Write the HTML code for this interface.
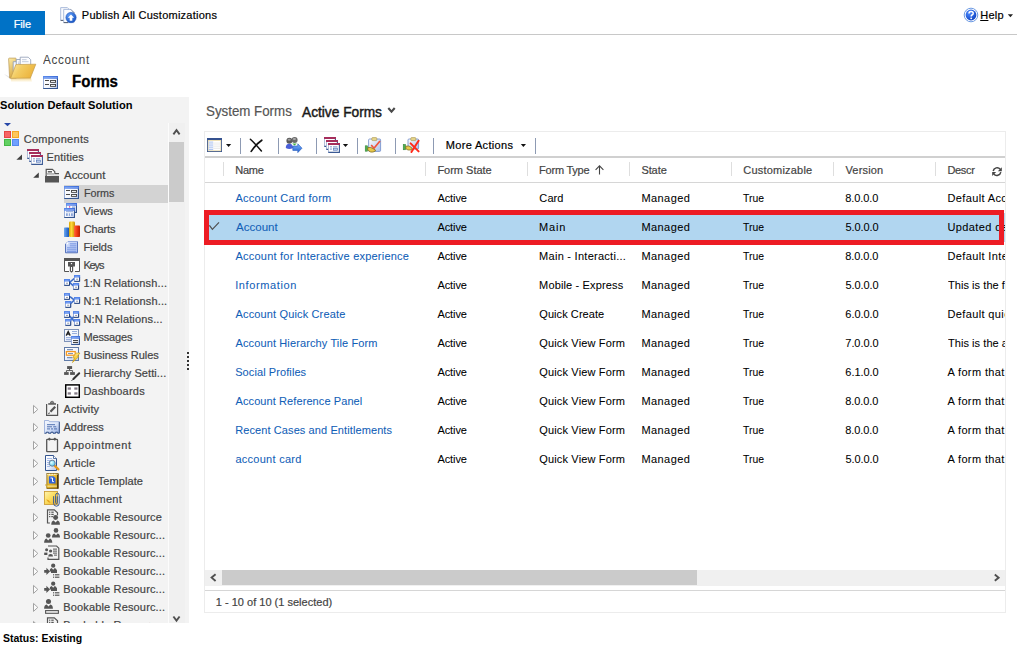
<!DOCTYPE html>
<html lang="en">
<head>
<meta charset="utf-8">
<title>Solution: Default Solution - Forms</title>
<style>
html,body{margin:0;padding:0;background:#fff;}
body{width:1017px;height:645px;position:relative;overflow:hidden;font-family:'Liberation Sans',sans-serif;}
.a{position:absolute;}
.t{position:absolute;white-space:pre;line-height:16px;height:16px;font-family:'Liberation Sans',sans-serif;}
svg{position:absolute;overflow:visible;}
</style>
</head>
<body>
<!-- top bar -->
<div class="a" style="left:0;top:34px;width:1017px;height:1px;background:#c8c8c8"></div>
<div class="a" style="left:0;top:11px;width:45px;height:24px;background:#0072c6"></div>

<!-- tree panel -->
<div class="a" style="left:0;top:97px;width:189px;height:526px;background:#f3f3f3"></div>
<div class="a" style="left:168px;top:123px;width:1px;height:500px;background:#fcfcfc"></div>
<div class="a" style="left:169px;top:123px;width:16px;height:500px;background:#f0f0f0"></div>
<div class="a" style="left:169px;top:142px;width:15px;height:60px;background:#cbcbcb"></div>
<div class="a" style="left:64px;top:185px;width:104px;height:18px;background:#d3d3d3"></div>

<!-- grid frame -->
<div class="a" style="left:204px;top:131px;width:802px;height:482px;border:1px solid #ececec;box-sizing:border-box"></div>
<div class="a" style="left:205px;top:156px;width:800px;height:2px;background:#d0d0d0"></div>
<div class="a" style="left:205px;top:182px;width:800px;height:1px;background:#d6d6d6"></div>
<!-- selected row -->
<div class="a" style="left:205px;top:213px;width:800px;height:29px;background:#b1d6f0"></div>
<div class="a" style="left:204px;top:210px;width:800px;height:35px;border:5px solid #ed1c24;box-sizing:border-box;z-index:5"></div>
<!-- h scrollbar -->
<div class="a" style="left:205px;top:570px;width:800px;height:16px;background:#f0f0f0"></div>
<div class="a" style="left:222px;top:570px;width:475px;height:15px;background:#cbcbcb"></div>
<div class="a" style="left:205px;top:590px;width:800px;height:1px;background:#d6d6d6"></div>

<svg class="ic" width="189" height="526" viewBox="0 97 189 526" style="left:0;top:97px;overflow:hidden"><defs>
<linearGradient id="gtitle" x1="0" y1="0" x2="1" y2="0"><stop offset="0" stop-color="#5d8cec"/><stop offset="1" stop-color="#3d6cd8"/></linearGradient>
<linearGradient id="gwin" x1="0" y1="0" x2="1" y2="1"><stop offset="0" stop-color="#ffffff"/><stop offset="0.6" stop-color="#f3f6fd"/><stop offset="1" stop-color="#b9c9ee"/></linearGradient>
<linearGradient id="gdoc" x1="0" y1="0" x2="0.6" y2="1"><stop offset="0" stop-color="#ffffff"/><stop offset="0.7" stop-color="#eef2fb"/><stop offset="1" stop-color="#c6d3f0"/></linearGradient>
<linearGradient id="gfld" x1="0" y1="0" x2="1" y2="1"><stop offset="0" stop-color="#d2defa"/><stop offset="1" stop-color="#b3c6f2"/></linearGradient>
<linearGradient id="gaddr" x1="0" y1="0" x2="0.8" y2="1"><stop offset="0" stop-color="#f4f7fe"/><stop offset="0.5" stop-color="#dfe8fa"/><stop offset="1" stop-color="#9ab2e4"/></linearGradient>
<linearGradient id="gblue" x1="0" y1="0" x2="1" y2="0"><stop offset="0" stop-color="#6fa8f0"/><stop offset="0.5" stop-color="#3f7fd8"/><stop offset="1" stop-color="#1f55b0"/></linearGradient>
<linearGradient id="gyel" x1="0" y1="0" x2="1" y2="0"><stop offset="0" stop-color="#d8a400"/><stop offset="0.4" stop-color="#ffd83a"/><stop offset="1" stop-color="#c89200"/></linearGradient>
<linearGradient id="gred" x1="0" y1="0" x2="1" y2="0"><stop offset="0" stop-color="#ff6a3a"/><stop offset="0.5" stop-color="#f23a12"/><stop offset="1" stop-color="#b81e00"/></linearGradient>
<linearGradient id="gbolt" x1="0" y1="0" x2="0" y2="1"><stop offset="0" stop-color="#ffe680"/><stop offset="1" stop-color="#f0b400"/></linearGradient>
<linearGradient id="ggold" x1="0" y1="0" x2="1" y2="1"><stop offset="0" stop-color="#ffe27a"/><stop offset="0.5" stop-color="#e8b62a"/><stop offset="1" stop-color="#8a6410"/></linearGradient>
<linearGradient id="gnote" x1="0" y1="0" x2="1" y2="1"><stop offset="0" stop-color="#fff5b0"/><stop offset="0.5" stop-color="#fbdc5e"/><stop offset="1" stop-color="#e8b030"/></linearGradient>
<radialGradient id="glens" cx="0.4" cy="0.4" r="0.7"><stop offset="0" stop-color="#e8ffff"/><stop offset="1" stop-color="#35c3ee"/></radialGradient>
<linearGradient id="gfold" x1="0" y1="0" x2="1" y2="0.4"><stop offset="0" stop-color="#fdeaa6"/><stop offset="0.45" stop-color="#f3cc62"/><stop offset="1" stop-color="#ecb43e"/></linearGradient>
<linearGradient id="grefl" x1="0" y1="0" x2="0" y2="1"><stop offset="0" stop-color="#f0c45a" stop-opacity="0.75"/><stop offset="1" stop-color="#f8e4a8" stop-opacity="0"/></linearGradient>
<linearGradient id="gfoldb" x1="0" y1="0" x2="0.3" y2="1"><stop offset="0" stop-color="#fdeca6"/><stop offset="1" stop-color="#d8aa48"/></linearGradient>
<radialGradient id="ghelp" cx="0.35" cy="0.3" r="0.8"><stop offset="0" stop-color="#4f8cff"/><stop offset="1" stop-color="#0a3fc0"/></radialGradient>
<radialGradient id="gpub" cx="0.35" cy="0.3" r="0.8"><stop offset="0" stop-color="#5f9cf5"/><stop offset="1" stop-color="#1450c0"/></radialGradient>
<linearGradient id="garrow" x1="0" y1="0" x2="0" y2="1"><stop offset="0" stop-color="#7fb6ff"/><stop offset="1" stop-color="#1f5fd0"/></linearGradient>
<linearGradient id="gclip" x1="0" y1="0" x2="1" y2="1"><stop offset="0" stop-color="#ffffff"/><stop offset="1" stop-color="#a9c0ea"/></linearGradient>
</defs><path d="M4,123 H11 L7.5,126.2 Z" fill="#2848a8"/>
<g transform="translate(4,131)"><rect x="0.5" y="0.5" width="6" height="6" fill="#f76464" stroke="#e64545"/><rect x="8.5" y="0.5" width="6" height="6" fill="#fdc65c" stroke="#f5a623"/><rect x="0.5" y="8.5" width="6" height="6" fill="#62d062" stroke="#45b845"/><rect x="8.5" y="8.5" width="6" height="6" fill="#6fa0ff" stroke="#5588ee"/></g>
<path d="M22.0,154.4 V159.8 H16.4 Z" fill="#404040"/>
<g transform="translate(27,149)"><rect x="0.5" y="0.5" width="11" height="9" fill="#fff" stroke="#a9b8d6" stroke-width="0.9"/><path d="M0.4,9.4 H11.4 V1.6" fill="none" stroke="#3b5a94" stroke-width="1.1"/><rect x="0" y="0" width="12" height="2" fill="#a62e5c"/><rect x="2.5" y="3.5" width="11" height="9" fill="#fff" stroke="#a9b8d6" stroke-width="0.9"/><path d="M2.4,12.4 H13.4 V4.6" fill="none" stroke="#3b5a94" stroke-width="1.1"/><rect x="2" y="3" width="12" height="2" fill="#a62e5c"/><rect x="4.5" y="6.5" width="11" height="9" fill="#fff" stroke="#a9b8d6" stroke-width="0.9"/><path d="M4.4,15.4 H15.4 V7.6" fill="none" stroke="#3b5a94" stroke-width="1.1"/><rect x="4" y="6" width="12" height="2" fill="#a62e5c"/><rect x="6" y="9.4" width="2" height="0.9" fill="#6f8cc8"/><rect x="6" y="11.6" width="2" height="0.9" fill="#6f8cc8"/><rect x="9" y="9.4" width="4.4" height="0.9" fill="#6f8cc8"/><rect x="9.4" y="11.2" width="4" height="2" fill="#c9d6f2" stroke="#5577b8" stroke-width="0.7"/></g>
<path d="M38.800000000000004,172.4 V177.8 H33.2 Z" fill="#404040"/>
<g transform="translate(45,168.5)"><rect x="0" y="7.4" width="14" height="6.6" fill="#555"/><path d="M1.2,7.4 V0.8 H7.4 L9.8,3.2 V5.2 H14" fill="#fff" stroke="#555" stroke-width="1.2"/><rect x="2.8" y="2.6" width="4.2" height="1.4" fill="#555"/><rect x="1.8" y="5.2" width="8" height="1" fill="#fff"/><rect x="1.8" y="5" width="7.6" height="0.9" fill="#555" opacity="0.85"/></g>
<g transform="translate(64,186)"><rect x="0.5" y="0.5" width="14" height="12" fill="url(#gwin)" stroke="#8fa6d6" stroke-width="0.9"/><path d="M0.3,12.45 H14.45 V2" fill="none" stroke="#34558f" stroke-width="1.1"/><rect x="0" y="0" width="15" height="2.7" fill="url(#gtitle)"/><rect x="0.8" y="1" width="13.4" height="0.8" fill="#8fb2f6" opacity="0.8"/><rect x="2" y="4" width="4" height="1" fill="#4a4a4a"/><rect x="2" y="8" width="4" height="1" fill="#4a4a4a"/><rect x="7.55" y="4.45" width="5" height="1.9" fill="#fff" stroke="#3c3c3c" stroke-width="0.9"/><rect x="7.55" y="8.45" width="5" height="1.9" fill="#fff" stroke="#3c3c3c" stroke-width="0.9"/></g>
<g transform="translate(64,203)"><rect x="2.5" y="0.5" width="10" height="9" fill="url(#gwin)" stroke="#8fa6d6" stroke-width="0.9"/><path d="M2.3,9.45 H12.45 V2" fill="none" stroke="#34558f" stroke-width="1.1"/><rect x="2" y="0" width="11" height="2.7" fill="url(#gtitle)"/><rect x="2.8" y="1" width="9.4" height="0.8" fill="#8fb2f6" opacity="0.8"/><rect x="5" y="3.3" width="1.2" height="1.2" fill="#e0208a"/><rect x="8" y="3.6" width="3" height="1" fill="#6a8fd0"/><rect x="0.5" y="5.5" width="10" height="9" fill="url(#gwin)" stroke="#8fa6d6" stroke-width="0.9"/><path d="M0.3,14.45 H10.45 V7" fill="none" stroke="#34558f" stroke-width="1.1"/><rect x="0" y="5" width="11" height="2.7" fill="url(#gtitle)"/><rect x="0.8" y="6" width="9.4" height="0.8" fill="#8fb2f6" opacity="0.8"/><rect x="2" y="8.2" width="7" height="1" fill="#8aa4d6"/><rect x="2" y="10.3" width="1.8" height="2.6" fill="#8aa4d6"/><rect x="4.8" y="10.3" width="1.2" height="2.6" fill="#8aa4d6"/><rect x="7" y="10.3" width="1.8" height="2.6" fill="#8aa4d6"/></g>
<g transform="translate(64,221)"><rect x="0" y="6.5" width="5" height="9.5" rx="0.6" fill="url(#gblue)"/><rect x="5" y="0.5" width="6" height="15.5" rx="1.2" fill="url(#gyel)"/><rect x="10" y="4.5" width="6" height="11.5" rx="0.8" fill="url(#gred)"/></g>
<g transform="translate(64.6,241)"><path d="M3.4,0.4 H13 V12 H0.8 V3 Z" fill="url(#gfld)"/><path d="M0.9,3 V11.8 H12.9 V0.5" fill="none" stroke="#4a68b4" stroke-width="0.9"/><path d="M0.9,3 L3.4,0.5 H12.9" fill="none" stroke="#7f98d8" stroke-width="0.8"/><path d="M1.2,3.2 H3.6 V0.8 Z" fill="#fff"/><g fill="#6f8fe0"><rect x="5.2" y="2.4" width="6.6" height="0.9"/><rect x="5.2" y="4.4" width="6.6" height="0.9"/><rect x="2.4" y="6.4" width="9.4" height="0.9"/><rect x="2.4" y="8.4" width="9.4" height="0.9"/><rect x="2.4" y="10.1" width="9.4" height="0.8"/></g></g>
<g transform="translate(64,258)"><rect x="0" y="0" width="16" height="3" fill="#555"/><path d="M0.5,2 V13.5 H5 M11,13.5 H15.5 V2" fill="#fff" stroke="#555" stroke-width="1"/><rect x="1" y="3" width="14" height="10" fill="#fff"/><path d="M4,4 H11 V8.5 H9.2 V13.2 L7.5,14.8 L5.8,13.2 V8.5 H4 Z" fill="#555"/><rect x="6.9" y="5" width="1.2" height="1.2" fill="#fff"/><rect x="7" y="9" width="1" height="4" fill="#fff"/></g>
<g transform="translate(64,274)"><path d="M5.5,8.4 L10.5,4.4 M5.5,8.4 L10,12.4" stroke="#3f6fc8" stroke-width="1.6" fill="none"/><rect x="0.4" y="5.4" width="5.2" height="6.0" fill="#fff" stroke="#7f9ad8" stroke-width="0.8"/><path d="M0.3,11.3 H5.5 V7" fill="none" stroke="#22407a" stroke-width="1"/><rect x="0" y="5" width="6" height="2.5" fill="#4f82ea"/><rect x="1" y="5.9" width="3.6" height="0.7" fill="#8fb0f4"/><rect x="2" y="8.7" width="2" height="1" fill="#8e94a8"/><rect x="10.5" y="1.4" width="5.2" height="6.0" fill="#fff" stroke="#7f9ad8" stroke-width="0.8"/><path d="M10.4,7.3 H15.600000000000001 V3" fill="none" stroke="#22407a" stroke-width="1"/><rect x="10.1" y="1" width="6" height="2.5" fill="#4f82ea"/><rect x="11.1" y="1.9" width="3.6" height="0.7" fill="#8fb0f4"/><rect x="12.1" y="4.7" width="2" height="1" fill="#8e94a8"/><rect x="9.5" y="9.4" width="5.2" height="6.0" fill="#fff" stroke="#7f9ad8" stroke-width="0.8"/><path d="M9.4,15.3 H14.6 V11" fill="none" stroke="#22407a" stroke-width="1"/><rect x="9.1" y="9" width="6" height="2.5" fill="#4f82ea"/><rect x="10.1" y="9.9" width="3.6" height="0.7" fill="#8fb0f4"/><rect x="11.1" y="12.7" width="2" height="1" fill="#8e94a8"/></g>
<g transform="translate(64,292)"><path d="M6,4.6 L10.4,8 L6.5,11.6" stroke="#3f6fc8" stroke-width="1.6" fill="none"/><rect x="0.4" y="1.6" width="5.2" height="5.8" fill="#fff" stroke="#7f9ad8" stroke-width="0.8"/><path d="M0.3,7.3 H5.5 V3.2" fill="none" stroke="#22407a" stroke-width="1"/><rect x="0" y="1.2" width="6" height="2.5" fill="#4f82ea"/><rect x="1" y="2.1" width="3.6" height="0.7" fill="#8fb0f4"/><rect x="2" y="4.9" width="2" height="1" fill="#8e94a8"/><rect x="1.6" y="9.4" width="5.2" height="6.0" fill="#fff" stroke="#7f9ad8" stroke-width="0.8"/><path d="M1.5,15.3 H6.7 V11" fill="none" stroke="#22407a" stroke-width="1"/><rect x="1.2" y="9" width="6" height="2.5" fill="#4f82ea"/><rect x="2.2" y="9.9" width="3.6" height="0.7" fill="#8fb0f4"/><rect x="3.2" y="12.7" width="2" height="1" fill="#8e94a8"/><rect x="10.5" y="5.4" width="5.2" height="6.0" fill="#fff" stroke="#7f9ad8" stroke-width="0.8"/><path d="M10.4,11.3 H15.600000000000001 V7" fill="none" stroke="#22407a" stroke-width="1"/><rect x="10.1" y="5" width="6" height="2.5" fill="#4f82ea"/><rect x="11.1" y="5.9" width="3.6" height="0.7" fill="#8fb0f4"/><rect x="12.1" y="8.7" width="2" height="1" fill="#8e94a8"/></g>
<g transform="translate(64,310)"><path d="M5,5.4 L11,12 M11,5.4 L5,12" stroke="#3f6fc8" stroke-width="1.8" fill="none"/><rect x="0.4" y="1.6" width="5.2" height="5.8" fill="#fff" stroke="#7f9ad8" stroke-width="0.8"/><path d="M0.3,7.3 H5.5 V3.2" fill="none" stroke="#22407a" stroke-width="1"/><rect x="0" y="1.2" width="6" height="2.5" fill="#4f82ea"/><rect x="1" y="2.1" width="3.6" height="0.7" fill="#8fb0f4"/><rect x="2" y="4.9" width="2" height="1" fill="#8e94a8"/><rect x="9.5" y="1.6" width="5.2" height="5.8" fill="#fff" stroke="#7f9ad8" stroke-width="0.8"/><path d="M9.4,7.3 H14.6 V3.2" fill="none" stroke="#22407a" stroke-width="1"/><rect x="9.1" y="1.2" width="6" height="2.5" fill="#4f82ea"/><rect x="10.1" y="2.1" width="3.6" height="0.7" fill="#8fb0f4"/><rect x="11.1" y="4.9" width="2" height="1" fill="#8e94a8"/><rect x="1.6" y="9.4" width="5.2" height="6.0" fill="#fff" stroke="#7f9ad8" stroke-width="0.8"/><path d="M1.5,15.3 H6.7 V11" fill="none" stroke="#22407a" stroke-width="1"/><rect x="1.2" y="9" width="6" height="2.5" fill="#4f82ea"/><rect x="2.2" y="9.9" width="3.6" height="0.7" fill="#8fb0f4"/><rect x="3.2" y="12.7" width="2" height="1" fill="#8e94a8"/><rect x="10.5" y="9.4" width="5.2" height="6.0" fill="#fff" stroke="#7f9ad8" stroke-width="0.8"/><path d="M10.4,15.3 H15.600000000000001 V11" fill="none" stroke="#22407a" stroke-width="1"/><rect x="10.1" y="9" width="6" height="2.5" fill="#4f82ea"/><rect x="11.1" y="9.9" width="3.6" height="0.7" fill="#8fb0f4"/><rect x="12.1" y="12.7" width="2" height="1" fill="#8e94a8"/></g>
<g transform="translate(64,329)"><rect x="0.5" y="0.5" width="14" height="12" fill="url(#gdoc)" stroke="#7f93b8"/><path d="M2.2,6.6 L4.2,2.4 L6.2,6.6 M3,5.2 H5.4" stroke="#222" stroke-width="1.3" fill="none"/><g fill="#8ea6da"><rect x="8" y="2" width="5" height="0.9"/><rect x="8" y="4" width="5" height="0.9"/><rect x="2" y="8.2" width="5" height="0.9"/><rect x="2" y="10.2" width="5" height="0.9"/></g><rect x="7.5" y="7.5" width="8" height="8" fill="url(#gwin)" stroke="#8fa6d6" stroke-width="0.9"/><path d="M7.3,15.45 H15.45 V9" fill="none" stroke="#34558f" stroke-width="1.1"/><rect x="7" y="7" width="9" height="2.7" fill="url(#gtitle)"/><rect x="7.8" y="8" width="7.4" height="0.8" fill="#8fb2f6" opacity="0.8"/><rect x="9" y="11" width="5" height="1.1" fill="#444"/><rect x="9" y="13" width="5" height="1.1" fill="#444"/></g>
<g transform="translate(64,347)"><rect x="0.5" y="0.5" width="14" height="13" fill="url(#gdoc)" stroke="#5f7aa8"/><rect x="3" y="2.2" width="6" height="1" fill="#5f7aa8"/><rect x="3" y="10.2" width="5" height="1" fill="#5f7aa8"/><rect x="2.4" y="4.6" width="8.8" height="3.6" fill="#fff" stroke="#f59a23" stroke-width="1.3"/><rect x="4" y="6" width="5" height="1" fill="#7f93b8"/><path d="M12,6 L16,6 L13.2,9.4 L15,9.4 L8.4,15.6 L10.6,10.8 L8.6,10.8 Z" fill="url(#gbolt)" stroke="#c89a10" stroke-width="0.6"/></g>
<g transform="translate(64,365)"><rect x="3.1" y="1.1" width="5" height="2.9" fill="#555"/><rect x="0.1" y="7.1" width="4.6" height="2.8" fill="#555"/><rect x="6.1" y="7.1" width="4.8" height="2.8" fill="#555"/><path d="M5.6,4 V5.6 M2.4,7.1 V5.6 H8.6 V7.1" stroke="#555" stroke-width="1" fill="none"/><path d="M15.2,8.2 L9.4,14" stroke="#333" stroke-width="2" stroke-linecap="round"/><path d="M8.9,14.4 L7.6,15.8" stroke="#333" stroke-width="1"/></g>
<g transform="translate(64,384)"><rect x="0.2" y="-0.6" width="16.6" height="15.4" rx="1" fill="#fff"/><rect x="1.7" y="0.9" width="13.6" height="12.4" fill="#fff" stroke="#000" stroke-width="1.5"/><g fill="#857c88"><rect x="3.7" y="3.4" width="3.2" height="2.3"/><rect x="10.3" y="3.4" width="3.2" height="2.3"/><rect x="3.7" y="8.3" width="3.2" height="2.3"/><rect x="10.3" y="8.3" width="3.2" height="2.3"/></g></g>
<path d="M33.5,405.4 L37.8,409.4 L33.5,413.4 Z" fill="#fbfbfb" stroke="#a3a3a3" stroke-width="1"/>
<g transform="translate(46,401)"><path d="M0.6,3 V14.4 H11.6 V3" fill="none" stroke="#555" stroke-width="1.2"/><rect x="2.2" y="2.2" width="7.8" height="1.5" fill="#555"/><path d="M4.2,2.4 Q4.4,0.2 6.1,0.2 Q7.8,0.2 8,2.4 Z" fill="#8a8a8a" stroke="#555" stroke-width="0.7"/><path d="M9.2,5.8 L4.4,10.8" stroke="#555" stroke-width="2.2"/><path d="M3.6,11.6 L2.4,13" stroke="#555" stroke-width="1.1"/></g>
<path d="M33.5,423.4 L37.8,427.4 L33.5,431.4 Z" fill="#fbfbfb" stroke="#a3a3a3" stroke-width="1"/>
<g transform="translate(44,420)"><path d="M0.4,0.4 H4.8 L5.4,1.6 H15.6 V13.6 H13.6 V12.6 H11.6 V13.6 H9 V12.6 H7 V13.6 H4.4 V12.6 H2.4 V13.6 H0.4 Z" fill="url(#gaddr)"/><path d="M0.4,13.2 H2.4 V12.2 H4.4 V13.2 H7 V12.2 H9 V13.2 H11.6 V12.2 H13.6 V13.2 H15.3 V1.8" fill="none" stroke="#2f4d85" stroke-width="1"/><path d="M0.5,12.8 V0.5 H4.8 L5.4,1.7 H15.4" fill="none" stroke="#8fa6d6" stroke-width="0.8"/><g fill="#4f70b0"><rect x="3" y="4.2" width="8" height="1"/><rect x="3" y="6.3" width="5" height="1"/><rect x="9.2" y="6.3" width="3" height="1"/><rect x="3" y="8.4" width="3" height="1"/><rect x="7" y="8.4" width="2" height="1"/><rect x="10" y="8.4" width="3" height="1"/></g></g>
<path d="M33.5,441.4 L37.8,445.4 L33.5,449.4 Z" fill="#fbfbfb" stroke="#a3a3a3" stroke-width="1"/>
<g transform="translate(46,437.5)"><rect x="0.7" y="1.8" width="10.8" height="12.4" rx="0.8" fill="none" stroke="#555" stroke-width="1.3"/><rect x="2.4" y="0.2" width="2" height="2.8" rx="0.8" fill="#555"/><rect x="7.8" y="0.2" width="2" height="2.8" rx="0.8" fill="#555"/></g>
<path d="M33.5,459.4 L37.8,463.4 L33.5,467.4 Z" fill="#fbfbfb" stroke="#a3a3a3" stroke-width="1"/>
<g transform="translate(45,455)"><path d="M0.5,0.5 H8.5 L11.5,3.5 V15.5 H0.5 Z" fill="url(#gdoc)" stroke="#34558f"/><path d="M8.5,0.5 V3.5 H11.5" fill="#fff" stroke="#34558f" stroke-width="0.8"/><g fill="#9db4e6"><rect x="2" y="3" width="5" height="0.9"/><rect x="2" y="5" width="3" height="0.9"/><rect x="2" y="7" width="2" height="0.9"/><rect x="2" y="9" width="2" height="0.9"/><rect x="2" y="11" width="3" height="0.9"/></g><path d="M9.6,10.6 L13.4,14.4" stroke="#e89a1c" stroke-width="2.2" stroke-linecap="round"/><circle cx="7.2" cy="8.2" r="3" fill="url(#glens)" stroke="#6b7d99" stroke-width="1"/></g>
<path d="M33.5,477.4 L37.8,481.4 L33.5,485.4 Z" fill="#fbfbfb" stroke="#a3a3a3" stroke-width="1"/>
<g transform="translate(44.5,473)"><rect x="2.4" y="0.4" width="11.2" height="15" fill="url(#ggold)" stroke="#7a5a10" stroke-width="0.8"/><rect x="12.6" y="1" width="1.4" height="14.6" fill="#4a3408"/><path d="M3,1.4 H13" stroke="#fff" stroke-width="1.4" stroke-dasharray="0.8 0.8"/><path d="M4.4,3.2 H9 L11,5 V10.4 H4.4 Z" fill="#2f62d8"/><path d="M6,5 H8 V8.6 H9.4" stroke="#fff" stroke-width="1" fill="none"/><path d="M0.6,12 H12.4 M1.6,14 H12.4" stroke="#d8a818" stroke-width="1.2"/><rect x="2.8" y="12.6" width="9.6" height="1" fill="#fff3b0"/></g>
<path d="M33.5,495.4 L37.8,499.4 L33.5,503.4 Z" fill="#fbfbfb" stroke="#a3a3a3" stroke-width="1"/>
<g transform="translate(44,491)"><rect x="0.4" y="0.4" width="13" height="13" fill="url(#gnote)" stroke="#c9962a" stroke-width="0.8"/><path d="M2.2,8.6 Q4.4,8 6.6,11.6 Q4.2,12.2 2.2,8.6 Z" fill="#e6a21e"/><path d="M9.6,5.2 V12.2 Q9.6,15.2 12.4,15.2 Q15.2,15.2 15.2,12.2 V4.4 Q15.2,2.2 13.4,2.2 Q11.6,2.2 11.6,4.4 V11.6 Q11.6,12.6 12.5,12.6 Q13.3,12.6 13.3,11.6 V5.4" fill="none" stroke="#3a5a90" stroke-width="1"/></g>
<path d="M33.5,513.4 L37.8,517.4 L33.5,521.4 Z" fill="#fbfbfb" stroke="#a3a3a3" stroke-width="1"/>
<g transform="translate(46.5,509)"><path d="M3.4,14 H1 V0.8 H7.8 L11,3.8 V6.2" fill="none" stroke="#555" stroke-width="1.2"/><g fill="#555"><rect x="2.6" y="2.6" width="1.2" height="1.2"/><rect x="4.8" y="2.6" width="2.4" height="1.2"/><rect x="2.6" y="4.8" width="1.2" height="1.2"/><rect x="4.8" y="4.8" width="2.4" height="1.2"/><rect x="2.6" y="7" width="1.2" height="1.2"/><rect x="4.8" y="7" width="1.6" height="1.2"/></g><circle cx="9.1" cy="8.522" r="2.484" fill="#555"/><path d="M4.779999999999999,15.703999999999999 Q4.779999999999999,12.056000000000001 7.263999999999999,11.486 L9.1,13.424 L10.936,11.486 Q13.42,12.056000000000001 13.42,15.703999999999999 Z" fill="#555"/></g>
<path d="M33.5,531.4 L37.8,535.4 L33.5,539.4 Z" fill="#fbfbfb" stroke="#a3a3a3" stroke-width="1"/>
<g transform="translate(44,527)"><circle cx="12" cy="3.4219999999999997" r="2.3" fill="#555"/><path d="M8.0,10.604 Q8.0,6.9559999999999995 10.3,6.386 L12,8.324 L13.7,6.386 Q16.0,6.9559999999999995 16.0,10.604 Z" fill="#555"/><circle cx="4.2" cy="8.491" r="2.3459999999999996" fill="#555"/><path d="M0.1200000000000001,15.861999999999998 Q0.1200000000000001,12.117999999999999 2.466,11.533 L4.2,13.521999999999998 L5.934,11.533 Q8.280000000000001,12.117999999999999 8.280000000000001,15.861999999999998 Z" fill="#555"/></g>
<path d="M33.5,549.4 L37.8,553.4 L33.5,557.4 Z" fill="#fbfbfb" stroke="#a3a3a3" stroke-width="1"/>
<g transform="translate(44,545)"><path d="M4,1 H12.6 L14.8,3.2 V14.4 H4 V12.4" fill="none" stroke="#555" stroke-width="1.2"/><g fill="#555"><rect x="9" y="3.6" width="4" height="1"/><rect x="9" y="5.6" width="4" height="1"/><rect x="9" y="7.6" width="4" height="1"/><rect x="10" y="9.6" width="3" height="1"/><circle cx="2.6" cy="4.8" r="1.5"/><rect x="0.2" y="7.6" width="3.2" height="2.4"/><circle cx="6.6" cy="6" r="1.6"/><path d="M4.2,11.4 Q4.2,9 6.6,9 Q9,9 9,11.4 Z"/></g></g>
<path d="M33.5,567.4 L37.8,571.4 L33.5,575.4 Z" fill="#fbfbfb" stroke="#a3a3a3" stroke-width="1"/>
<g transform="translate(44,563)"><path d="M0.2,7 H2.4 V4.8 L6,8.4 L2.4,12 V9.8 H0.2 Z" fill="#555"/><circle cx="9.2" cy="2.716" r="2.116" fill="#555"/><path d="M5.52,8.512 Q5.52,5.5680000000000005 7.635999999999999,5.1080000000000005 L9.2,6.672 L10.764,5.1080000000000005 Q12.879999999999999,5.5680000000000005 12.879999999999999,8.512 Z" fill="#555"/><rect x="7" y="7" width="6" height="3" fill="#555"/><g fill="#555"><rect x="9" y="11.2" width="1.2" height="1.2"/><rect x="11" y="11.2" width="4.4" height="1.2"/><rect x="9" y="13.6" width="1.2" height="1.2"/><rect x="11" y="13.6" width="4.4" height="1.2"/></g></g>
<path d="M33.5,585.4 L37.8,589.4 L33.5,593.4 Z" fill="#fbfbfb" stroke="#a3a3a3" stroke-width="1"/>
<g transform="translate(44,581)"><path d="M0.2,7 H2.4 V4.8 L6,8.4 L2.4,12 V9.8 H0.2 Z" fill="#555"/><circle cx="9.2" cy="2.716" r="2.116" fill="#555"/><path d="M5.52,8.512 Q5.52,5.5680000000000005 7.635999999999999,5.1080000000000005 L9.2,6.672 L10.764,5.1080000000000005 Q12.879999999999999,5.5680000000000005 12.879999999999999,8.512 Z" fill="#555"/><rect x="7" y="7" width="6" height="3" fill="#555"/><g fill="#555"><rect x="9" y="11.2" width="1.2" height="1.2"/><rect x="11" y="11.2" width="4.4" height="1.2"/><rect x="9" y="13.6" width="1.2" height="1.2"/><rect x="11" y="13.6" width="4.4" height="1.2"/></g></g>
<path d="M33.5,603.4 L37.8,607.4 L33.5,611.4 Z" fill="#fbfbfb" stroke="#a3a3a3" stroke-width="1"/>
<g transform="translate(44,598)"><circle cx="4.5" cy="3.4449999999999994" r="2.53" fill="#555"/><path d="M0.09999999999999964,10.69 Q0.09999999999999964,7.01 2.63,6.435 L4.5,8.389999999999999 L6.37,6.435 Q8.9,7.01 8.9,10.69 Z" fill="#555"/><rect x="1.6" y="12.6" width="12.8" height="2.7" fill="#f3f3f3" stroke="#555" stroke-width="1.1"/></g>
<path d="M33.5,621.4 L37.8,625.4 L33.5,629.4 Z" fill="#fbfbfb" stroke="#a3a3a3" stroke-width="1"/>
<g transform="translate(46.5,617)"><path d="M3.4,14 H1 V0.8 H7.8 L11,3.8 V6.2" fill="none" stroke="#555" stroke-width="1.2"/><g fill="#555"><rect x="2.6" y="2.6" width="1.2" height="1.2"/><rect x="4.8" y="2.6" width="2.4" height="1.2"/><rect x="2.6" y="4.8" width="1.2" height="1.2"/><rect x="4.8" y="4.8" width="2.4" height="1.2"/><rect x="2.6" y="7" width="1.2" height="1.2"/><rect x="4.8" y="7" width="1.6" height="1.2"/></g><circle cx="9.1" cy="8.522" r="2.484" fill="#555"/><path d="M4.779999999999999,15.703999999999999 Q4.779999999999999,12.056000000000001 7.263999999999999,11.486 L9.1,13.424 L10.936,11.486 Q13.42,12.056000000000001 13.42,15.703999999999999 Z" fill="#555"/></g></svg>
<svg class="ic" width="1017" height="645" viewBox="0 0 1017 645" style="left:0;top:0"><g transform="translate(60.2,7)"><path d="M0.5,0.6 H7.2 L8.4,1.8 V13.4 H0.5 Z" fill="#fafbfe" stroke="#a3b5d8" stroke-width="0.9"/><path d="M0.5,13.4 H4" stroke="#4a5264" stroke-width="0.9"/><path d="M3.5,2.4 H10.6 L13.8,5.6 V15.6 H3.5 Z" fill="#fdfdff" stroke="#a3b5d8" stroke-width="0.9"/><path d="M3.5,15.6 H8" stroke="#4a5264" stroke-width="0.9"/><path d="M10.8,2.6 L14,5.8" stroke="#4a5264" stroke-width="1" stroke-dasharray="1 0.8"/><circle cx="10.8" cy="10.5" r="5.2" fill="url(#gpub)" stroke="#2458b8" stroke-width="0.5"/><path d="M10.8,7.6 L13.9,10.7 H12.1 V13.8 H9.5 V10.7 H7.7 Z" fill="#fff"/></g>
<g transform="translate(964,8)"><circle cx="7" cy="7" r="6.8" fill="#fff" stroke="#5b8fe0" stroke-width="0.9"/><circle cx="7" cy="7" r="5.4" fill="url(#ghelp)"/><path d="M5,5.4 Q5,3.4 7.1,3.4 Q9.2,3.4 9.2,5.2 Q9.2,6.4 8,7 Q7.2,7.5 7.2,8.4" fill="none" stroke="#fff" stroke-width="1.5"/><circle cx="7.2" cy="10.3" r="0.9" fill="#fff"/></g>
<path d="M1007.8,14.2 H1013.0 L1010.4,17.2 Z" fill="#222"/>
<g transform="translate(4,57.5)"><path d="M6.6,21 L27,20.6 L28,24.6 L7.2,25 Z" fill="url(#grefl)"/><path d="M0,16.5 L5.4,21 L6.4,19.6 Z" fill="#d8d8d8" opacity="0.7"/><path d="M4.6,1.4 Q4.6,0.6 5.4,0.6 H11.4 Q12.2,0.6 12.2,1.4 V20.6 H5.6 Z" fill="url(#gfoldb)" stroke="#b99a5c" stroke-width="0.7"/><path d="M9.2,4.2 H15.5 V14 H9.2 Z" fill="#f4f6fb" stroke="#8e9cb4" stroke-width="0.8"/><path d="M12.3,2 H20 V12 H12.3 Z" fill="#f8f9fd" stroke="#8e9cb4" stroke-width="0.8"/><path d="M16.2,-0.3 H24.2 L26.7,2.2 V10 H16.2 Z" fill="#fdfdff" stroke="#8e9cb4" stroke-width="0.8"/><path d="M18,2.2 H22.6 M18,4.2 H24.6 M14,4.6 H15.4 M14,6 H15.6" stroke="#b4bfd2" stroke-width="0.8"/><path d="M11.9,7.1 L31.8,6.7 L26.4,20.5 L6.6,20.8 Z" fill="url(#gfold)" stroke="#c49c4c" stroke-width="0.7"/></g>
<g transform="translate(43,76)"><rect x="0.5" y="0.5" width="14" height="12" fill="url(#gwin)" stroke="#8fa6d6" stroke-width="0.9"/><path d="M0.3,12.45 H14.45 V2" fill="none" stroke="#34558f" stroke-width="1.1"/><rect x="0" y="0" width="15" height="2.7" fill="url(#gtitle)"/><rect x="0.8" y="1" width="13.4" height="0.8" fill="#8fb2f6" opacity="0.8"/><rect x="2" y="4" width="4" height="1" fill="#4a4a4a"/><rect x="2" y="8" width="4" height="1" fill="#4a4a4a"/><rect x="7.55" y="4.45" width="5" height="1.9" fill="#fff" stroke="#3c3c3c" stroke-width="0.9"/><rect x="7.55" y="8.45" width="5" height="1.9" fill="#fff" stroke="#3c3c3c" stroke-width="0.9"/></g>
<g transform="translate(207,138)"><rect x="0" y="0" width="15" height="14" fill="#35528f"/><rect x="0.8" y="2" width="13.4" height="11.2" fill="#ead9a4"/><rect x="1.6" y="2.8" width="11.8" height="9.6" fill="#fff"/><g fill="#a9c0f0"><rect x="1.6" y="3.6" width="4.6" height="1"/><rect x="1.6" y="5.5" width="4.6" height="1"/><rect x="1.6" y="7.4" width="4.6" height="1"/><rect x="1.6" y="9.3" width="4.6" height="1"/><rect x="1.6" y="11.1" width="4.6" height="1"/></g><g fill="#e4e4e4"><rect x="6.2" y="4.7" width="7.2" height="0.7"/><rect x="6.2" y="6.6" width="7.2" height="0.7"/><rect x="6.2" y="8.5" width="7.2" height="0.7"/><rect x="6.2" y="10.3" width="7.2" height="0.7"/></g></g>
<path d="M226,144 H231.2 L228.6,147 Z" fill="#111"/>
<g transform="translate(249.6,138.6)"><path d="M0.8,0.6 Q5,4.4 11.8,12.4" stroke="#111" stroke-width="1.5" fill="none" stroke-linecap="round"/><path d="M12.2,1.6 Q6.4,5.6 1.6,12.8" stroke="#111" stroke-width="1.7" fill="none" stroke-linecap="round"/></g>
<g transform="translate(285.8,137)"><circle cx="3.6" cy="3.8" r="3" fill="#5a5a5a"/><circle cx="8.8" cy="3" r="3" fill="#6a6a6a"/><ellipse cx="3.4" cy="2.8" rx="1.6" ry="1" fill="#9a9a9a"/><ellipse cx="8.6" cy="2" rx="1.6" ry="1" fill="#aaa"/><path d="M0,11 Q0,6.8 3.6,6.8 Q7,6.8 7.2,11 Q3.6,13 0,11 Z" fill="#4a5fd8"/><path d="M6.4,6.4 L8.8,8.6 L11,6.4 Z" fill="#3fae3f"/><path d="M7,9 H12 V6.8 L16.2,11.2 L12,15.6 V13.4 H7 Z" fill="url(#garrow)" stroke="#1f55b8" stroke-width="0.6"/></g>
<g transform="translate(324,137)"><rect x="0.5" y="0.5" width="11" height="9" fill="#fff" stroke="#a9b8d6" stroke-width="0.9"/><path d="M0.4,9.4 H11.4 V1.6" fill="none" stroke="#3b5a94" stroke-width="1.1"/><rect x="0" y="0" width="12" height="2" fill="#a62e5c"/><rect x="2.5" y="3.5" width="11" height="9" fill="#fff" stroke="#a9b8d6" stroke-width="0.9"/><path d="M2.4,12.4 H13.4 V4.6" fill="none" stroke="#3b5a94" stroke-width="1.1"/><rect x="2" y="3" width="12" height="2" fill="#a62e5c"/><rect x="4.5" y="6.5" width="11" height="9" fill="#fff" stroke="#a9b8d6" stroke-width="0.9"/><path d="M4.4,15.4 H15.4 V7.6" fill="none" stroke="#3b5a94" stroke-width="1.1"/><rect x="4" y="6" width="12" height="2" fill="#a62e5c"/><rect x="6" y="9.4" width="2" height="0.9" fill="#6f8cc8"/><rect x="6" y="11.6" width="2" height="0.9" fill="#6f8cc8"/><rect x="9" y="9.4" width="4.4" height="0.9" fill="#6f8cc8"/><rect x="9.4" y="11.2" width="4" height="2" fill="#c9d6f2" stroke="#5577b8" stroke-width="0.7"/></g>
<path d="M342.9,144 H348.09999999999997 L345.5,147 Z" fill="#111"/>
<g transform="translate(365,137.4)"><rect x="3.6" y="1.6" width="12" height="12.4" rx="1" fill="url(#gclip)" stroke="#6f8cc8" stroke-width="0.8"/><rect x="6.8" y="0.2" width="5" height="3" rx="0.8" fill="#e6d58a" stroke="#a8924a" stroke-width="0.6"/><path d="M6.2,7.6 L9,10.8 L15,3.6" stroke="#f0553a" stroke-width="1.7" fill="none"/><rect x="0.2" y="8.4" width="2.4" height="5.4" fill="#4caf50" stroke="#2f7d32" stroke-width="0.5"/><path d="M2.8,10.2 Q6,9.2 8.6,11.6 Q11,12.2 10.4,13.6 Q8,15.2 5.6,14.6 L2.8,12.8 Z" fill="#e8c84a" stroke="#7a6416" stroke-width="0.7"/></g>
<g transform="translate(403,137.4)"><rect x="5" y="1.6" width="10.6" height="10" rx="1" fill="url(#gclip)" stroke="#6f8cc8" stroke-width="0.8"/><rect x="7.8" y="0.2" width="5" height="3" rx="0.8" fill="#e6d58a" stroke="#a8924a" stroke-width="0.6"/><rect x="0.2" y="7" width="2.4" height="5.4" fill="#4caf50" stroke="#2f7d32" stroke-width="0.5"/><path d="M2.8,8.8 Q6,7.8 8.4,10 Q9.6,11.4 8,12.6 L5,12.6 L2.8,11.4 Z" fill="#e8c84a" stroke="#7a6416" stroke-width="0.7"/><path d="M7.6,6 L15.6,14 M15.6,3.4 L8.4,14.6" stroke="#ff2a1a" stroke-width="2" fill="none" stroke-linecap="round"/></g>
<path d="M520.8,144 H526.0 L523.4,147 Z" fill="#111"/>
<rect x="240" y="138" width="1" height="16" fill="#8d9ab3"/>
<rect x="278" y="138" width="1" height="16" fill="#8d9ab3"/>
<rect x="316" y="138" width="1" height="16" fill="#8d9ab3"/>
<rect x="357" y="138" width="1" height="16" fill="#8d9ab3"/>
<rect x="395" y="138" width="1" height="16" fill="#8d9ab3"/>
<rect x="433" y="138" width="1" height="16" fill="#8d9ab3"/>
<rect x="535" y="138" width="1" height="16" fill="#8d9ab3"/>
<rect x="223" y="162" width="1" height="14" fill="#dedede"/>
<rect x="425" y="162" width="1" height="14" fill="#dedede"/>
<rect x="527" y="162" width="1" height="14" fill="#dedede"/>
<rect x="629" y="162" width="1" height="14" fill="#dedede"/>
<rect x="731" y="162" width="1" height="14" fill="#dedede"/>
<rect x="833" y="162" width="1" height="14" fill="#dedede"/>
<rect x="935" y="162" width="1" height="14" fill="#dedede"/>
<path d="M599.5,174.4 V166 M595.6,169.8 L599.5,165.9 L603.4,169.8" fill="none" stroke="#444" stroke-width="1.1"/>
<g transform="translate(992,166.6)"><path d="M1.2,4.4 A4,4 0 0 1 8.2,2.6" fill="none" stroke="#444" stroke-width="1.5"/><path d="M9.8,0.6 V4.6 H5.8 Z" fill="#444"/><path d="M8.8,5.6 A4,4 0 0 1 1.8,7.4" fill="none" stroke="#444" stroke-width="1.5"/><path d="M0.2,9.4 V5.4 H4.2 Z" fill="#444"/></g>
<path d="M388.3,108 L391.5,111.6 L394.7,108" fill="none" stroke="#4a4a4a" stroke-width="2.1"/>
<path d="M209.4,225.4 L212.4,229.4 L219,222.4" fill="none" stroke="#505050" stroke-width="1.2"/>
<path d="M173.4,134.4 L176.5,130.2 L179.6,134.4" fill="none" stroke="#505050" stroke-width="1.9"/>
<path d="M173.4,616.5 L176.5,620.6 L179.6,616.5" fill="none" stroke="#505050" stroke-width="1.9"/>
<path d="M215.6,574.2 L211.6,577.6 L215.6,581" fill="none" stroke="#505050" stroke-width="1.9"/>
<path d="M994.8,574.6 L998.6,577.7 L994.8,580.8" fill="none" stroke="#505050" stroke-width="1.9"/>
<rect x="187" y="352" width="2" height="2" fill="#333"/>
<rect x="187" y="356" width="2" height="2" fill="#333"/>
<rect x="187" y="360" width="2" height="2" fill="#333"/>
<rect x="187" y="364" width="2" height="2" fill="#333"/>
<rect x="187" y="368" width="2" height="2" fill="#333"/></svg>
<div class="t" id="t0" style="left:13.63px;top:16.00px;font-size:11px;color:#fff;letter-spacing:-0.112px;-webkit-text-stroke:0.2px;">File</div>
<div class="t" id="t1" style="left:81.85px;top:7.00px;font-size:11px;color:#000;letter-spacing:0.242px;-webkit-text-stroke:0.2px;">Publish All Customizations</div>
<div class="t" id="t2" style="left:980.20px;top:7.00px;font-size:11px;color:#000;letter-spacing:0.289px;-webkit-text-stroke:0.2px;"><u>H</u>elp</div>
<div class="t" id="t3" style="left:42.78px;top:52.00px;font-size:13px;color:#444;transform:scaleX(0.9023);transform-origin:0 0;letter-spacing:0.7px;-webkit-text-stroke:0;">Account</div>
<div class="t" id="t4" style="left:71.67px;top:74.00px;font-size:15.6px;color:#000;font-weight:700;transform:scaleX(0.9650);transform-origin:0 0;-webkit-text-stroke:0.3px #000;">Forms</div>
<div class="t" id="t5" style="left:0.36px;top:97.00px;font-size:11.2px;color:#000;font-weight:700;transform:scaleX(0.9912);transform-origin:0 0;">Solution Default Solution</div>
<div class="t" id="t6" style="left:206.38px;top:103.00px;font-size:14.5px;color:#555;transform:scaleX(0.9180);transform-origin:0 0;-webkit-text-stroke:0.2px;">System Forms</div>
<div class="t" id="t7" style="left:302.06px;top:104.00px;font-size:14px;color:#1a1a1a;transform:scaleX(0.9791);transform-origin:0 0;-webkit-text-stroke:0.45px #1a1a1a;">Active Forms</div>
<div class="t" id="t8" style="left:445.77px;top:137.00px;font-size:11px;color:#000;letter-spacing:0.330px;-webkit-text-stroke:0.2px;">More Actions</div>
<div class="t" id="t9" style="left:3.00px;top:630.00px;font-size:11.2px;color:#000;font-weight:700;transform:scaleX(0.9359);transform-origin:0 0;">Status: Existing</div>
<div class="t" id="t10" style="left:215.80px;top:594.00px;font-size:11px;color:#444;letter-spacing:0.008px;-webkit-text-stroke:0.2px;">1 - 10 of 10 (1 selected)</div>
<div class="t" id="t11" style="left:23.73px;top:131.00px;font-size:11px;color:#444;letter-spacing:0.295px;-webkit-text-stroke:0.2px;">Components</div>
<div class="t" id="t12" style="left:46.40px;top:149.00px;font-size:11px;color:#444;letter-spacing:0.198px;-webkit-text-stroke:0.2px;">Entities</div>
<div class="t" id="t13" style="left:63.57px;top:167.00px;font-size:11px;color:#444;transform:scaleX(1.0404);transform-origin:0 0;-webkit-text-stroke:0.2px;">Account</div>
<div class="t" id="t14" style="left:83.52px;top:185.00px;font-size:11px;color:#444;transform:scaleX(0.9742);transform-origin:0 0;-webkit-text-stroke:0.2px;">Forms</div>
<div class="t" id="t15" style="left:83.62px;top:203.00px;font-size:11px;color:#444;letter-spacing:0.022px;-webkit-text-stroke:0.2px;">Views</div>
<div class="t" id="t16" style="left:83.84px;top:221.00px;font-size:11px;color:#444;letter-spacing:-0.147px;-webkit-text-stroke:0.2px;">Charts</div>
<div class="t" id="t17" style="left:83.40px;top:239.00px;font-size:11px;color:#444;letter-spacing:-0.070px;-webkit-text-stroke:0.2px;">Fields</div>
<div class="t" id="t18" style="left:83.40px;top:257.00px;font-size:11px;color:#444;letter-spacing:-1.122px;-webkit-text-stroke:0.2px;">Keys</div>
<div class="t" id="t19" style="left:83.39px;top:275.00px;font-size:11px;color:#444;letter-spacing:0.140px;-webkit-text-stroke:0.2px;">1:N Relationsh...</div>
<div class="t" id="t20" style="left:83.40px;top:293.00px;font-size:11px;color:#444;letter-spacing:0.153px;-webkit-text-stroke:0.2px;">N:1 Relationsh...</div>
<div class="t" id="t21" style="left:83.40px;top:311.00px;font-size:11px;color:#444;letter-spacing:0.145px;-webkit-text-stroke:0.2px;">N:N Relations...</div>
<div class="t" id="t22" style="left:83.40px;top:329.00px;font-size:11px;color:#444;letter-spacing:-0.144px;-webkit-text-stroke:0.2px;">Messages</div>
<div class="t" id="t23" style="left:83.40px;top:347.00px;font-size:11px;color:#444;letter-spacing:-0.037px;-webkit-text-stroke:0.2px;">Business Rules</div>
<div class="t" id="t24" style="left:83.40px;top:365.00px;font-size:11px;color:#444;letter-spacing:0.089px;-webkit-text-stroke:0.2px;">Hierarchy Setti...</div>
<div class="t" id="t25" style="left:83.40px;top:383.00px;font-size:11px;color:#444;letter-spacing:0.216px;-webkit-text-stroke:0.2px;">Dashboards</div>
<div class="t" id="t26" style="left:63.46px;top:401.00px;font-size:11px;color:#444;letter-spacing:0.112px;-webkit-text-stroke:0.2px;">Activity</div>
<div class="t" id="t27" style="left:63.46px;top:419.00px;font-size:11px;color:#444;letter-spacing:-0.014px;-webkit-text-stroke:0.2px;">Address</div>
<div class="t" id="t28" style="left:63.46px;top:437.00px;font-size:11px;color:#444;letter-spacing:0.572px;-webkit-text-stroke:0.2px;">Appointment</div>
<div class="t" id="t29" style="left:63.46px;top:455.00px;font-size:11px;color:#444;letter-spacing:0.171px;-webkit-text-stroke:0.2px;">Article</div>
<div class="t" id="t30" style="left:63.46px;top:473.00px;font-size:11px;color:#444;letter-spacing:0.095px;-webkit-text-stroke:0.2px;">Article Template</div>
<div class="t" id="t31" style="left:63.46px;top:491.00px;font-size:11px;color:#444;letter-spacing:0.301px;-webkit-text-stroke:0.2px;">Attachment</div>
<div class="t" id="t32" style="left:63.30px;top:509.00px;font-size:11px;color:#444;letter-spacing:0.160px;-webkit-text-stroke:0.2px;">Bookable Resource</div>
<div class="t" id="t33" style="left:63.30px;top:527.00px;font-size:11px;color:#444;letter-spacing:0.151px;-webkit-text-stroke:0.2px;">Bookable Resourc...</div>
<div class="t" id="t34" style="left:63.30px;top:545.00px;font-size:11px;color:#444;letter-spacing:0.151px;-webkit-text-stroke:0.2px;">Bookable Resourc...</div>
<div class="t" id="t35" style="left:63.30px;top:563.00px;font-size:11px;color:#444;letter-spacing:0.151px;-webkit-text-stroke:0.2px;">Bookable Resourc...</div>
<div class="t" id="t36" style="left:63.30px;top:581.00px;font-size:11px;color:#444;letter-spacing:0.151px;-webkit-text-stroke:0.2px;">Bookable Resourc...</div>
<div class="t" id="t37" style="left:63.30px;top:599.00px;font-size:11px;color:#444;letter-spacing:0.151px;-webkit-text-stroke:0.2px;">Bookable Resourc...</div>
<div class="t" id="t38" style="left:63.30px;top:617.00px;font-size:11px;color:#444;letter-spacing:0.151px;height:6.00px;overflow:hidden;-webkit-text-stroke:0.2px;">Bookable Resourc...</div>
<div class="t" id="t39" style="left:235.20px;top:162.00px;font-size:11px;color:#444;letter-spacing:-0.209px;-webkit-text-stroke:0.2px;">Name</div>
<div class="t" id="t40" style="left:437.40px;top:162.00px;font-size:11px;color:#444;letter-spacing:-0.007px;-webkit-text-stroke:0.2px;">Form State</div>
<div class="t" id="t41" style="left:539.10px;top:162.00px;font-size:11px;color:#444;letter-spacing:-0.239px;-webkit-text-stroke:0.2px;">Form Type</div>
<div class="t" id="t42" style="left:641.40px;top:162.00px;font-size:11px;color:#444;letter-spacing:-0.082px;-webkit-text-stroke:0.2px;">State</div>
<div class="t" id="t43" style="left:743.37px;top:162.00px;font-size:11px;color:#444;letter-spacing:0.194px;-webkit-text-stroke:0.2px;">Customizable</div>
<div class="t" id="t44" style="left:845.47px;top:162.00px;font-size:11px;color:#444;letter-spacing:0.166px;-webkit-text-stroke:0.2px;">Version</div>
<div class="t" id="t45" style="left:947.40px;top:162.00px;font-size:11px;color:#444;letter-spacing:-0.298px;-webkit-text-stroke:0.2px;">Descr</div>
<div class="t" id="t46" style="left:235.54px;top:190.00px;font-size:11px;color:#1160b7;letter-spacing:0.249px;-webkit-text-stroke:0.06px;">Account Card form</div>
<div class="t" id="t47" style="left:437.41px;top:190.00px;font-size:11px;color:#000;letter-spacing:-0.078px;-webkit-text-stroke:0.06px;">Active</div>
<div class="t" id="t48" style="left:539.37px;top:190.00px;font-size:11px;color:#000;letter-spacing:0.095px;-webkit-text-stroke:0.06px;">Card</div>
<div class="t" id="t49" style="left:641.40px;top:190.00px;font-size:11px;color:#000;letter-spacing:0.434px;-webkit-text-stroke:0.06px;">Managed</div>
<div class="t" id="t50" style="left:743.35px;top:190.00px;font-size:11px;color:#000;transform:scaleX(0.9413);transform-origin:0 0;-webkit-text-stroke:0.06px;">True</div>
<div class="t" id="t51" style="left:845.32px;top:190.00px;font-size:11px;color:#000;letter-spacing:-0.091px;-webkit-text-stroke:0.06px;">8.0.0.0</div>
<div class="t" id="t52" style="left:947.40px;top:190.00px;font-size:11px;color:#000;letter-spacing:0.378px;width:58.00px;overflow:hidden;-webkit-text-stroke:0.06px;">Default Account Card form</div>
<div class="t" id="t53" style="left:235.68px;top:219.00px;font-size:11px;color:#1160b7;transform:scaleX(1.0499);transform-origin:0 0;-webkit-text-stroke:0.06px;">Account</div>
<div class="t" id="t54" style="left:437.41px;top:219.00px;font-size:11px;color:#000;letter-spacing:-0.078px;-webkit-text-stroke:0.06px;">Active</div>
<div class="t" id="t55" style="left:539.10px;top:219.00px;font-size:11px;color:#000;letter-spacing:0.792px;-webkit-text-stroke:0.06px;">Main</div>
<div class="t" id="t56" style="left:641.40px;top:219.00px;font-size:11px;color:#000;letter-spacing:0.434px;-webkit-text-stroke:0.06px;">Managed</div>
<div class="t" id="t57" style="left:743.35px;top:219.00px;font-size:11px;color:#000;transform:scaleX(0.9413);transform-origin:0 0;-webkit-text-stroke:0.06px;">True</div>
<div class="t" id="t58" style="left:845.39px;top:219.00px;font-size:11px;color:#000;letter-spacing:-0.055px;-webkit-text-stroke:0.06px;">5.0.0.0</div>
<div class="t" id="t59" style="left:947.40px;top:219.00px;font-size:11px;color:#000;letter-spacing:0.400px;width:58.00px;overflow:hidden;-webkit-text-stroke:0.06px;">Updated default account form</div>
<div class="t" id="t60" style="left:235.54px;top:248.00px;font-size:11px;color:#1160b7;letter-spacing:0.214px;-webkit-text-stroke:0.06px;">Account for Interactive experience</div>
<div class="t" id="t61" style="left:437.41px;top:248.00px;font-size:11px;color:#000;letter-spacing:-0.078px;-webkit-text-stroke:0.06px;">Active</div>
<div class="t" id="t62" style="left:539.10px;top:248.00px;font-size:11px;color:#000;letter-spacing:0.269px;-webkit-text-stroke:0.06px;">Main - Interacti...</div>
<div class="t" id="t63" style="left:641.40px;top:248.00px;font-size:11px;color:#000;letter-spacing:0.434px;-webkit-text-stroke:0.06px;">Managed</div>
<div class="t" id="t64" style="left:743.35px;top:248.00px;font-size:11px;color:#000;transform:scaleX(0.9413);transform-origin:0 0;-webkit-text-stroke:0.06px;">True</div>
<div class="t" id="t65" style="left:845.32px;top:248.00px;font-size:11px;color:#000;letter-spacing:-0.091px;-webkit-text-stroke:0.06px;">8.0.0.0</div>
<div class="t" id="t66" style="left:947.40px;top:248.00px;font-size:11px;color:#000;letter-spacing:0.378px;width:58.00px;overflow:hidden;-webkit-text-stroke:0.06px;">Default Interactive experience form</div>
<div class="t" id="t67" style="left:235.20px;top:277.00px;font-size:11px;color:#1160b7;letter-spacing:0.623px;-webkit-text-stroke:0.06px;">Information</div>
<div class="t" id="t68" style="left:437.41px;top:277.00px;font-size:11px;color:#000;letter-spacing:-0.078px;-webkit-text-stroke:0.06px;">Active</div>
<div class="t" id="t69" style="left:539.10px;top:277.00px;font-size:11px;color:#000;letter-spacing:0.147px;-webkit-text-stroke:0.06px;">Mobile - Express</div>
<div class="t" id="t70" style="left:641.40px;top:277.00px;font-size:11px;color:#000;letter-spacing:0.434px;-webkit-text-stroke:0.06px;">Managed</div>
<div class="t" id="t71" style="left:743.35px;top:277.00px;font-size:11px;color:#000;transform:scaleX(0.9413);transform-origin:0 0;-webkit-text-stroke:0.06px;">True</div>
<div class="t" id="t72" style="left:845.39px;top:277.00px;font-size:11px;color:#000;letter-spacing:-0.055px;-webkit-text-stroke:0.06px;">5.0.0.0</div>
<div class="t" id="t73" style="left:947.96px;top:277.00px;font-size:11px;color:#000;letter-spacing:0.061px;width:57.44px;overflow:hidden;-webkit-text-stroke:0.06px;">This is the form used for mobile</div>
<div class="t" id="t74" style="left:235.54px;top:306.00px;font-size:11px;color:#1160b7;letter-spacing:0.144px;-webkit-text-stroke:0.06px;">Account Quick Create</div>
<div class="t" id="t75" style="left:437.41px;top:306.00px;font-size:11px;color:#000;letter-spacing:-0.078px;-webkit-text-stroke:0.06px;">Active</div>
<div class="t" id="t76" style="left:539.32px;top:306.00px;font-size:11px;color:#000;letter-spacing:0.064px;-webkit-text-stroke:0.06px;">Quick Create</div>
<div class="t" id="t77" style="left:641.40px;top:306.00px;font-size:11px;color:#000;letter-spacing:0.434px;-webkit-text-stroke:0.06px;">Managed</div>
<div class="t" id="t78" style="left:743.35px;top:306.00px;font-size:11px;color:#000;transform:scaleX(0.9413);transform-origin:0 0;-webkit-text-stroke:0.06px;">True</div>
<div class="t" id="t79" style="left:845.37px;top:306.00px;font-size:11px;color:#000;letter-spacing:-0.056px;-webkit-text-stroke:0.06px;">6.0.0.0</div>
<div class="t" id="t80" style="left:947.40px;top:306.00px;font-size:11px;color:#000;letter-spacing:0.378px;width:58.00px;overflow:hidden;-webkit-text-stroke:0.06px;">Default quick create form</div>
<div class="t" id="t81" style="left:235.54px;top:335.00px;font-size:11px;color:#1160b7;letter-spacing:0.120px;-webkit-text-stroke:0.06px;">Account Hierarchy Tile Form</div>
<div class="t" id="t82" style="left:437.41px;top:335.00px;font-size:11px;color:#000;letter-spacing:-0.078px;-webkit-text-stroke:0.06px;">Active</div>
<div class="t" id="t83" style="left:539.32px;top:335.00px;font-size:11px;color:#000;letter-spacing:0.145px;-webkit-text-stroke:0.06px;">Quick View Form</div>
<div class="t" id="t84" style="left:641.40px;top:335.00px;font-size:11px;color:#000;letter-spacing:0.434px;-webkit-text-stroke:0.06px;">Managed</div>
<div class="t" id="t85" style="left:743.35px;top:335.00px;font-size:11px;color:#000;transform:scaleX(0.9413);transform-origin:0 0;-webkit-text-stroke:0.06px;">True</div>
<div class="t" id="t86" style="left:845.36px;top:335.00px;font-size:11px;color:#000;letter-spacing:-0.081px;-webkit-text-stroke:0.06px;">7.0.0.0</div>
<div class="t" id="t87" style="left:947.96px;top:335.00px;font-size:11px;color:#000;letter-spacing:0.061px;width:57.44px;overflow:hidden;-webkit-text-stroke:0.06px;">This is the account hierarchy tile</div>
<div class="t" id="t88" style="left:235.20px;top:364.00px;font-size:11px;color:#1160b7;letter-spacing:0.088px;-webkit-text-stroke:0.06px;">Social Profiles</div>
<div class="t" id="t89" style="left:437.41px;top:364.00px;font-size:11px;color:#000;letter-spacing:-0.078px;-webkit-text-stroke:0.06px;">Active</div>
<div class="t" id="t90" style="left:539.32px;top:364.00px;font-size:11px;color:#000;letter-spacing:0.145px;-webkit-text-stroke:0.06px;">Quick View Form</div>
<div class="t" id="t91" style="left:641.40px;top:364.00px;font-size:11px;color:#000;letter-spacing:0.434px;-webkit-text-stroke:0.06px;">Managed</div>
<div class="t" id="t92" style="left:743.35px;top:364.00px;font-size:11px;color:#000;transform:scaleX(0.9413);transform-origin:0 0;-webkit-text-stroke:0.06px;">True</div>
<div class="t" id="t93" style="left:845.37px;top:364.00px;font-size:11px;color:#000;letter-spacing:-0.056px;-webkit-text-stroke:0.06px;">6.1.0.0</div>
<div class="t" id="t94" style="left:947.41px;top:364.00px;font-size:11px;color:#000;letter-spacing:0.377px;width:57.99px;overflow:hidden;-webkit-text-stroke:0.06px;">A form that shows social profiles</div>
<div class="t" id="t95" style="left:235.54px;top:393.00px;font-size:11px;color:#1160b7;letter-spacing:0.089px;-webkit-text-stroke:0.06px;">Account Reference Panel</div>
<div class="t" id="t96" style="left:437.41px;top:393.00px;font-size:11px;color:#000;letter-spacing:-0.078px;-webkit-text-stroke:0.06px;">Active</div>
<div class="t" id="t97" style="left:539.32px;top:393.00px;font-size:11px;color:#000;letter-spacing:0.145px;-webkit-text-stroke:0.06px;">Quick View Form</div>
<div class="t" id="t98" style="left:641.40px;top:393.00px;font-size:11px;color:#000;letter-spacing:0.434px;-webkit-text-stroke:0.06px;">Managed</div>
<div class="t" id="t99" style="left:743.35px;top:393.00px;font-size:11px;color:#000;transform:scaleX(0.9413);transform-origin:0 0;-webkit-text-stroke:0.06px;">True</div>
<div class="t" id="t100" style="left:845.32px;top:393.00px;font-size:11px;color:#000;letter-spacing:-0.091px;-webkit-text-stroke:0.06px;">8.0.0.0</div>
<div class="t" id="t101" style="left:947.41px;top:393.00px;font-size:11px;color:#000;letter-spacing:0.377px;width:57.99px;overflow:hidden;-webkit-text-stroke:0.06px;">A form that shows account</div>
<div class="t" id="t102" style="left:235.20px;top:422.00px;font-size:11px;color:#1160b7;letter-spacing:0.098px;-webkit-text-stroke:0.06px;">Recent Cases and Entitlements</div>
<div class="t" id="t103" style="left:437.41px;top:422.00px;font-size:11px;color:#000;letter-spacing:-0.078px;-webkit-text-stroke:0.06px;">Active</div>
<div class="t" id="t104" style="left:539.32px;top:422.00px;font-size:11px;color:#000;letter-spacing:0.145px;-webkit-text-stroke:0.06px;">Quick View Form</div>
<div class="t" id="t105" style="left:641.40px;top:422.00px;font-size:11px;color:#000;letter-spacing:0.434px;-webkit-text-stroke:0.06px;">Managed</div>
<div class="t" id="t106" style="left:743.35px;top:422.00px;font-size:11px;color:#000;transform:scaleX(0.9413);transform-origin:0 0;-webkit-text-stroke:0.06px;">True</div>
<div class="t" id="t107" style="left:845.32px;top:422.00px;font-size:11px;color:#000;letter-spacing:-0.091px;-webkit-text-stroke:0.06px;">8.0.0.0</div>
<div class="t" id="t108" style="left:947.41px;top:422.00px;font-size:11px;color:#000;letter-spacing:0.377px;width:57.99px;overflow:hidden;-webkit-text-stroke:0.06px;">A form that shows recent cases</div>
<div class="t" id="t109" style="left:235.42px;top:451.00px;font-size:11px;color:#1160b7;letter-spacing:0.271px;-webkit-text-stroke:0.06px;">account card</div>
<div class="t" id="t110" style="left:437.41px;top:451.00px;font-size:11px;color:#000;letter-spacing:-0.078px;-webkit-text-stroke:0.06px;">Active</div>
<div class="t" id="t111" style="left:539.32px;top:451.00px;font-size:11px;color:#000;letter-spacing:0.145px;-webkit-text-stroke:0.06px;">Quick View Form</div>
<div class="t" id="t112" style="left:641.40px;top:451.00px;font-size:11px;color:#000;letter-spacing:0.434px;-webkit-text-stroke:0.06px;">Managed</div>
<div class="t" id="t113" style="left:743.35px;top:451.00px;font-size:11px;color:#000;transform:scaleX(0.9413);transform-origin:0 0;-webkit-text-stroke:0.06px;">True</div>
<div class="t" id="t114" style="left:845.39px;top:451.00px;font-size:11px;color:#000;letter-spacing:-0.055px;-webkit-text-stroke:0.06px;">5.0.0.0</div>
<div class="t" id="t115" style="left:947.41px;top:451.00px;font-size:11px;color:#000;letter-spacing:0.377px;width:57.99px;overflow:hidden;-webkit-text-stroke:0.06px;">A form that shows account card</div>
</body>
</html>
